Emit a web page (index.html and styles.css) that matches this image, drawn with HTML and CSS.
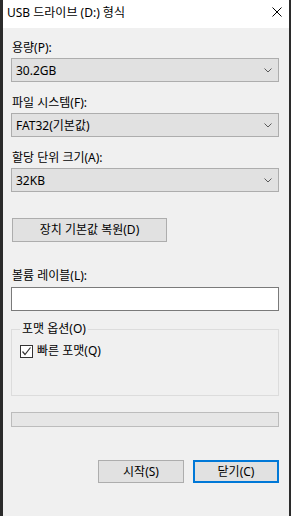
FILE: index.html
```html
<!DOCTYPE html>
<html lang="ko">
<head>
    <meta charset="UTF-8">
    <title>USB 드라이브 (D:) 형식</title>
    <link rel="stylesheet" href="styles.css">
</head>
<body>
    <div class="window">
        <div class="titlebar">
            <span class="title">USB 드라이브 (D:) 형식</span>
            <svg class="close" width="10" height="10" viewBox="0 0 10 10">
                <path d="M0.5 0.5 L9.5 9.5 M9.5 0.5 L0.5 9.5" stroke="#000" stroke-width="1" fill="none"/>
            </svg>
        </div>

        <div class="content">
            <div class="label first">용량(P):</div>
            <div class="combo">
                <span>30.2GB</span>
                <svg class="chev" width="8" height="5" viewBox="0 0 8 5"><path d="M0.5 0.5 L4 4 L7.5 0.5" stroke="#5a5a5a" fill="none"/></svg>
            </div>

            <div class="label">파일 시스템(F):</div>
            <div class="combo">
                <span>FAT32(기본값)</span>
                <svg class="chev" width="8" height="5" viewBox="0 0 8 5"><path d="M0.5 0.5 L4 4 L7.5 0.5" stroke="#5a5a5a" fill="none"/></svg>
            </div>

            <div class="label">할당 단위 크기(A):</div>
            <div class="combo">
                <span>32KB</span>
                <svg class="chev" width="8" height="5" viewBox="0 0 8 5"><path d="M0.5 0.5 L4 4 L7.5 0.5" stroke="#5a5a5a" fill="none"/></svg>
            </div>

            <button class="btn restore">장치 기본값 복원(D)</button>

            <div class="label volume">볼륨 레이블(L):</div>
            <div class="textbox"></div>

            <fieldset class="group">
                <legend>포맷 옵션(O)</legend>
                <label class="check">
                    <span class="box">
                        <svg width="11" height="11" viewBox="0 0 11 11"><path d="M1.5 5.5 L4 8.5 L9.5 1.5" stroke="#333" stroke-width="1.2" fill="none"/></svg>
                    </span>
                    빠른 포맷(Q)
                </label>
            </fieldset>

            <div class="progress"></div>

            <div class="actions">
                <button class="btn">시작(S)</button>
                <button class="btn default">닫기(C)</button>
            </div>
        </div>
    </div>
</body>
</html>
```

FILE: styles.css
```css
body {
    margin: 0;
    padding: 0;
    font-family: "Noto Sans", "Noto Sans CJK KR", sans-serif;
    font-size: 12px;
    color: #000000;
}

.window {
    width: 291px;
    height: 516px;
    box-sizing: border-box;
    border-left: 3px solid #2b2b2b;
    border-right: 2px solid #2b2b2b;
    background-color: #f0f0f0;
    display: flex;
    flex-direction: column;
}

.titlebar {
    height: 28px;
    background-color: #ffffff;
    display: flex;
    align-items: center;
    justify-content: space-between;
    padding: 0 7px 0 4px;
}

.title {
    line-height: 16px;
    margin-top: -2px;
}

.close {
    margin-top: -4px;
}

.content {
    display: flex;
    flex-direction: column;
    padding: 0 10px 0 8px;
}

.label {
    line-height: 16px;
    height: 16px;
    margin: 13px 0 2px 1px;
}

.label.first {
    margin-top: 12px;
}

.combo {
    height: 24px;
    box-sizing: border-box;
    border: 1px solid #adadad;
    background-color: #e1e1e1;
    display: flex;
    align-items: center;
    justify-content: space-between;
    padding: 0 6px 0 4px;
}

.btn {
    font-family: inherit;
    font-size: 12px;
    color: #000000;
    height: 24px;
    box-sizing: border-box;
    border: 1px solid #adadad;
    background-color: #e1e1e1;
    padding: 0;
    line-height: 16px;
}

.restore {
    width: 155px;
    margin: 26px 0 0 1px;
    align-self: flex-start;
}

.label.volume {
    margin-top: 26px;
    margin-bottom: 3px;
}

.textbox {
    height: 24px;
    box-sizing: border-box;
    border: 1px solid #7a7a7a;
    background-color: #ffffff;
}

.group {
    margin: 10px 0 0 0;
    padding: 0 0 0 8px;
    border: 1px solid #dcdcdc;
    height: 75px;
    box-sizing: border-box;
}

.group legend {
    padding: 0 2px;
    line-height: 16px;
}

.check {
    display: flex;
    align-items: center;
    gap: 4px;
    margin-top: 6px;
    line-height: 16px;
}

.box {
    width: 13px;
    height: 13px;
    box-sizing: border-box;
    border: 1px solid #333333;
    background-color: #ffffff;
    display: flex;
    align-items: center;
    justify-content: center;
}

.progress {
    height: 15px;
    box-sizing: border-box;
    margin-top: 16px;
    border: 1px solid #bcbcbc;
    background-color: #e6e6e6;
}

.actions {
    display: flex;
    justify-content: flex-end;
    gap: 9px;
    margin-top: 33px;
}

.actions .btn {
    width: 86px;
    height: 23px;
}

.btn.default {
    border: 2px solid #0078d7;
}
```
